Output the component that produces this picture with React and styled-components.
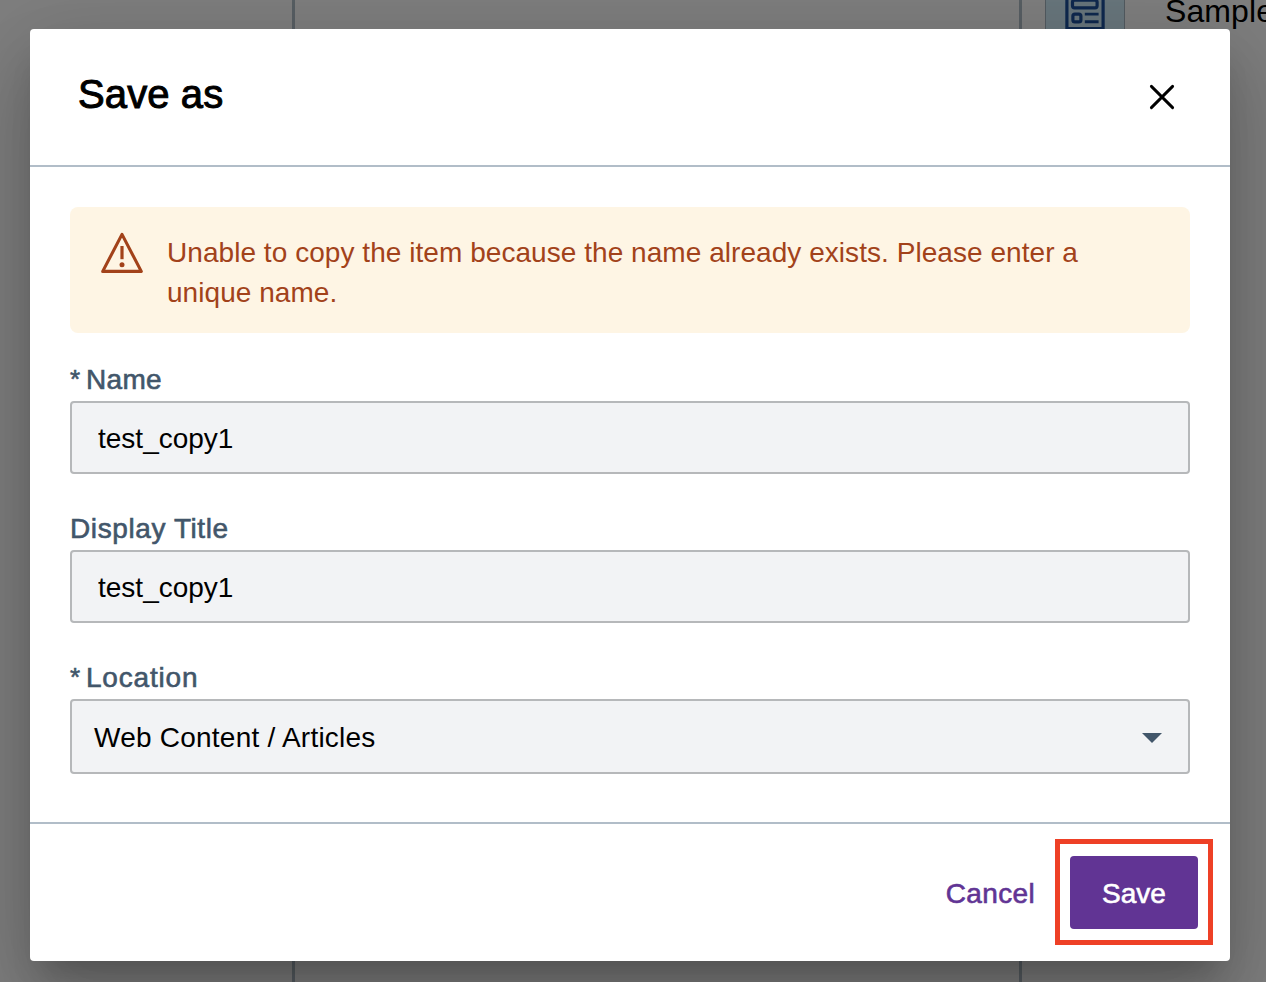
import React from "react";
import styled, { createGlobalStyle } from "styled-components";

const GlobalStyle = createGlobalStyle`
  *, *::before, *::after { box-sizing: border-box; }
  html, body { margin: 0; overflow: hidden; }
  body { font-family: "Liberation Sans", Arial, sans-serif; color: #000; }
  button, input { font: inherit; }
`;

const Screen = styled.div`
  position: relative;
  width: 1266px;
  height: 982px;
  overflow: hidden;
  background: #fff;
`;

const Page = styled.div`
  display: flex;
  height: 100%;
`;

const Column = styled.section`
  flex: 0 0 ${({ $width }) => $width}px;
  border-right: ${({ $last }) => ($last ? "none" : "3px solid #b0bec9")};
`;

const ContentItem = styled.div`
  display: flex;
  align-items: flex-start;
  margin: -20px 0 0 23px;
`;

const ItemThumb = styled.div`
  width: 80px;
  height: 60px;
  display: flex;
  justify-content: center;
  background: #d3eefb;
  border: 1px solid #a6b6c2;
`;

const ItemTitle = styled.span`
  margin: 13px 0 0 40px;
  font-size: 32px;
  line-height: 37px;
  letter-spacing: 0.1px;
  white-space: nowrap;
`;

const Overlay = styled.div`
  position: absolute;
  inset: 0;
  display: flex;
  padding: 29px 36px 21px 30px;
  background: rgba(0, 0, 0, 0.5);
`;

const Dialog = styled.div`
  flex: 1;
  display: flex;
  flex-direction: column;
  background: #fff;
  border-radius: 4px;
  box-shadow: 0 22px 30px -14px rgba(0, 0, 0, 0.2),
    0 48px 76px 6px rgba(0, 0, 0, 0.14), 0 18px 92px 16px rgba(0, 0, 0, 0.12);
`;

const Header = styled.header`
  height: 138px;
  display: flex;
  align-items: flex-start;
  justify-content: space-between;
  padding: 42px 55px 0 48px;
  border-bottom: 2px solid #b1bdc8;
`;

const Title = styled.h1`
  margin: 0;
  font-size: 40px;
  line-height: 46px;
  font-weight: 400;
  letter-spacing: 0.1px;
  -webkit-text-stroke: 1px currentColor;
`;

const CloseButton = styled.button`
  display: flex;
  margin-top: 13px;
  padding: 0;
  border: 0;
  background: none;
`;

const Body = styled.main`
  flex: 1;
  padding: 40px 40px 0;
`;

const Alert = styled.div`
  height: 126px;
  display: flex;
  padding: 25px 30px 0;
  border-radius: 8px;
  background: #fef5e4;
  color: #a2421a;
  font-size: 28px;
  line-height: 40px;
`;

const AlertText = styled.p`
  margin: 1px 0 0 23px;
  letter-spacing: 0.05px;
`;

const Field = styled.div`
  margin-top: ${({ $first }) => ($first ? 28 : 36)}px;
`;

const Label = styled.label`
  display: flex;
  height: 40px;
  font-size: 28px;
  line-height: 37px;
  letter-spacing: ${({ $tracking = 0.3 }) => $tracking}px;
  color: #42566a;
  -webkit-text-stroke: 0.6px currentColor;
`;

const Required = styled.span`
  width: 16px;
  font-size: 26px;
`;

const Input = styled.input`
  display: block;
  width: 100%;
  height: 73px;
  padding: 2px 26px 0;
  border: 2px solid #b6b8ba;
  border-radius: 4px;
  background: #f2f3f5;
  color: #000;
  font-size: 28px;
  outline: none;
`;

const Select = styled.div`
  height: 75px;
  display: flex;
  align-items: center;
  justify-content: space-between;
  padding: 2px 26px 0 22px;
  border: 2px solid #b6b8ba;
  border-radius: 4px;
  background: #f2f3f5;
  font-size: 28px;
  letter-spacing: 0.23px;
`;

const Footer = styled.footer`
  height: 139px;
  display: flex;
  justify-content: flex-end;
  align-items: flex-start;
  padding: 15px 17px 0 0;
  border-top: 2px solid #b1bdc8;
`;

const CancelButton = styled.button`
  margin: 17px 20px 0 0;
  height: 73px;
  padding: 2px 0 0;
  border: 0;
  background: none;
  color: #613494;
  font-size: 28px;
  letter-spacing: 0.35px;
  -webkit-text-stroke: 0.6px currentColor;
`;

const Highlight = styled.div`
  width: 158px;
  height: 106px;
  padding: 12px 10px;
  border: 5px solid #ee4026;
`;

const SaveButton = styled.button`
  display: block;
  width: 128px;
  height: 73px;
  padding: 2px 0 0;
  border: 0;
  border-radius: 4px;
  background: #613494;
  color: #fff;
  font-size: 28px;
  -webkit-text-stroke: 0.6px currentColor;
`;

function DocumentIcon() {
  return (
    <svg width="40" height="60" viewBox="0 0 40 60" fill="none" stroke="#1f539e" strokeWidth="3.2">
      <rect x="1.9" y="-5" width="36.2" height="52.6" />
      <rect x="7.5" y="19.2" width="24.6" height="7.6" rx="2" />
      <rect x="7.9" y="33.1" width="8" height="7.8" rx="2" />
      <path d="M19.8 33.1h13.8M19.8 40.7h13.8" strokeWidth="2.9" />
    </svg>
  );
}

function CloseIcon() {
  return (
    <svg width="26" height="26" viewBox="0 0 26 26" fill="none" stroke="#000" strokeWidth="2.9" strokeLinecap="round">
      <path d="M2.4 2.4 23.6 23.6M23.6 2.4 2.4 23.6" />
    </svg>
  );
}

function WarningIcon() {
  return (
    <svg width="44" height="42" viewBox="0 0 44 42" fill="none">
      <path d="M22 2.4 41.3 39.4H2.7Z" stroke="currentColor" strokeWidth="3.1" strokeLinejoin="round" />
      <path d="M22 14v13.2" stroke="currentColor" strokeWidth="3.2" />
      <circle cx="22" cy="32.8" r="2.5" fill="currentColor" />
    </svg>
  );
}

function Caret() {
  return (
    <svg width="20" height="10" viewBox="0 0 20 10">
      <path d="M0 0h20L10 10Z" fill="#42566a" />
    </svg>
  );
}

export default function App() {
  return (
    <Screen>
      <GlobalStyle />
      <Page>
        <Column $width={295} />
        <Column $width={727} />
        <Column $width={244} $last>
          <ContentItem>
            <ItemThumb>
              <DocumentIcon />
            </ItemThumb>
            <ItemTitle>Sample</ItemTitle>
          </ContentItem>
        </Column>
      </Page>
      <Overlay>
        <Dialog role="dialog" aria-label="Save as">
          <Header>
            <Title>Save as</Title>
            <CloseButton aria-label="Close">
              <CloseIcon />
            </CloseButton>
          </Header>
          <Body>
            <Alert role="alert">
              <WarningIcon />
              <AlertText>
                Unable to copy the item because the name already exists. Please enter a
                <br />
                unique name.
              </AlertText>
            </Alert>
            <Field $first>
              <Label htmlFor="name">
                <Required>*</Required>Name
              </Label>
              <Input id="name" defaultValue="test_copy1" />
            </Field>
            <Field>
              <Label htmlFor="title" $tracking={0.6}>Display Title</Label>
              <Input id="title" defaultValue="test_copy1" />
            </Field>
            <Field>
              <Label $tracking={0.8}>
                <Required>*</Required>Location
              </Label>
              <Select>
                <span>Web Content / Articles</span>
                <Caret />
              </Select>
            </Field>
          </Body>
          <Footer>
            <CancelButton>Cancel</CancelButton>
            <Highlight>
              <SaveButton>Save</SaveButton>
            </Highlight>
          </Footer>
        </Dialog>
      </Overlay>
    </Screen>
  );
}
